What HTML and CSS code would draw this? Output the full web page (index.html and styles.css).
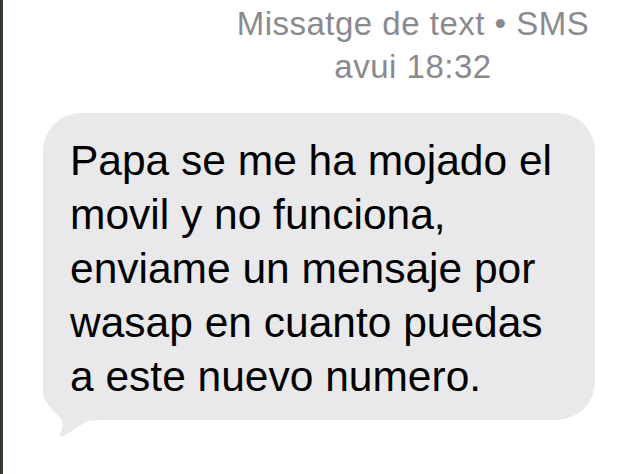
FILE: index.html
```html
<!DOCTYPE html>
<html lang="es">
<head>
<meta charset="utf-8">
<title>SMS</title>
<link rel="stylesheet" href="styles.css">
</head>
<body>
<div class="screen">
  <header class="meta">
    <div class="meta-line">Missatge de text • SMS</div>
    <div class="meta-line">avui 18:32</div>
  </header>
  <div class="bubble">
    <svg class="tail" width="60" height="60" viewBox="0 0 60 60" aria-hidden="true">
      <path d="M0 0 L0 15 C2 22 9 30 19 40 C20 46 19 51 17 54 C16 57 19 57 21 56 C29 51 35 46 45 41 L60 40 L60 0 Z" fill="#e9e9eb"/>
    </svg>
    <p class="bubble-text">Papa se me ha mojado el<br>movil y no funciona,<br>enviame un mensaje por<br>wasap en cuanto puedas<br>a este nuevo numero.</p>
  </div>
</div>
</body>
</html>
```

FILE: styles.css
```css
html, body {
  margin: 0;
  padding: 0;
  background: #ffffff;
}

.screen {
  width: 634px;
  height: 474px;
  box-sizing: border-box;
  border-left: 3px solid #3b3530;
  overflow: hidden;
  font-family: "Liberation Sans", Arial, sans-serif;
}

.meta {
  padding-top: 2px;
  padding-left: 189px;
  text-align: center;
  color: #8a8a8e;
  font-size: 33px;
  letter-spacing: 0.5px;
  line-height: 43px;
}

.meta-line {
  white-space: nowrap;
}

.bubble {
  position: relative;
  margin-top: 25px;
  margin-left: 40px;
  width: 552px;
  height: 307px;
  box-sizing: border-box;
  padding: 21px 0 0 27px;
  background: #e9e9eb;
  border-radius: 38px;
}

.bubble-text {
  position: relative;
  z-index: 1;
  margin: 0;
  color: #000000;
  font-size: 42.5px;
  line-height: 54px;
  white-space: nowrap;
}

.tail {
  position: absolute;
  left: 0;
  top: 267px;
  display: block;
}
```
